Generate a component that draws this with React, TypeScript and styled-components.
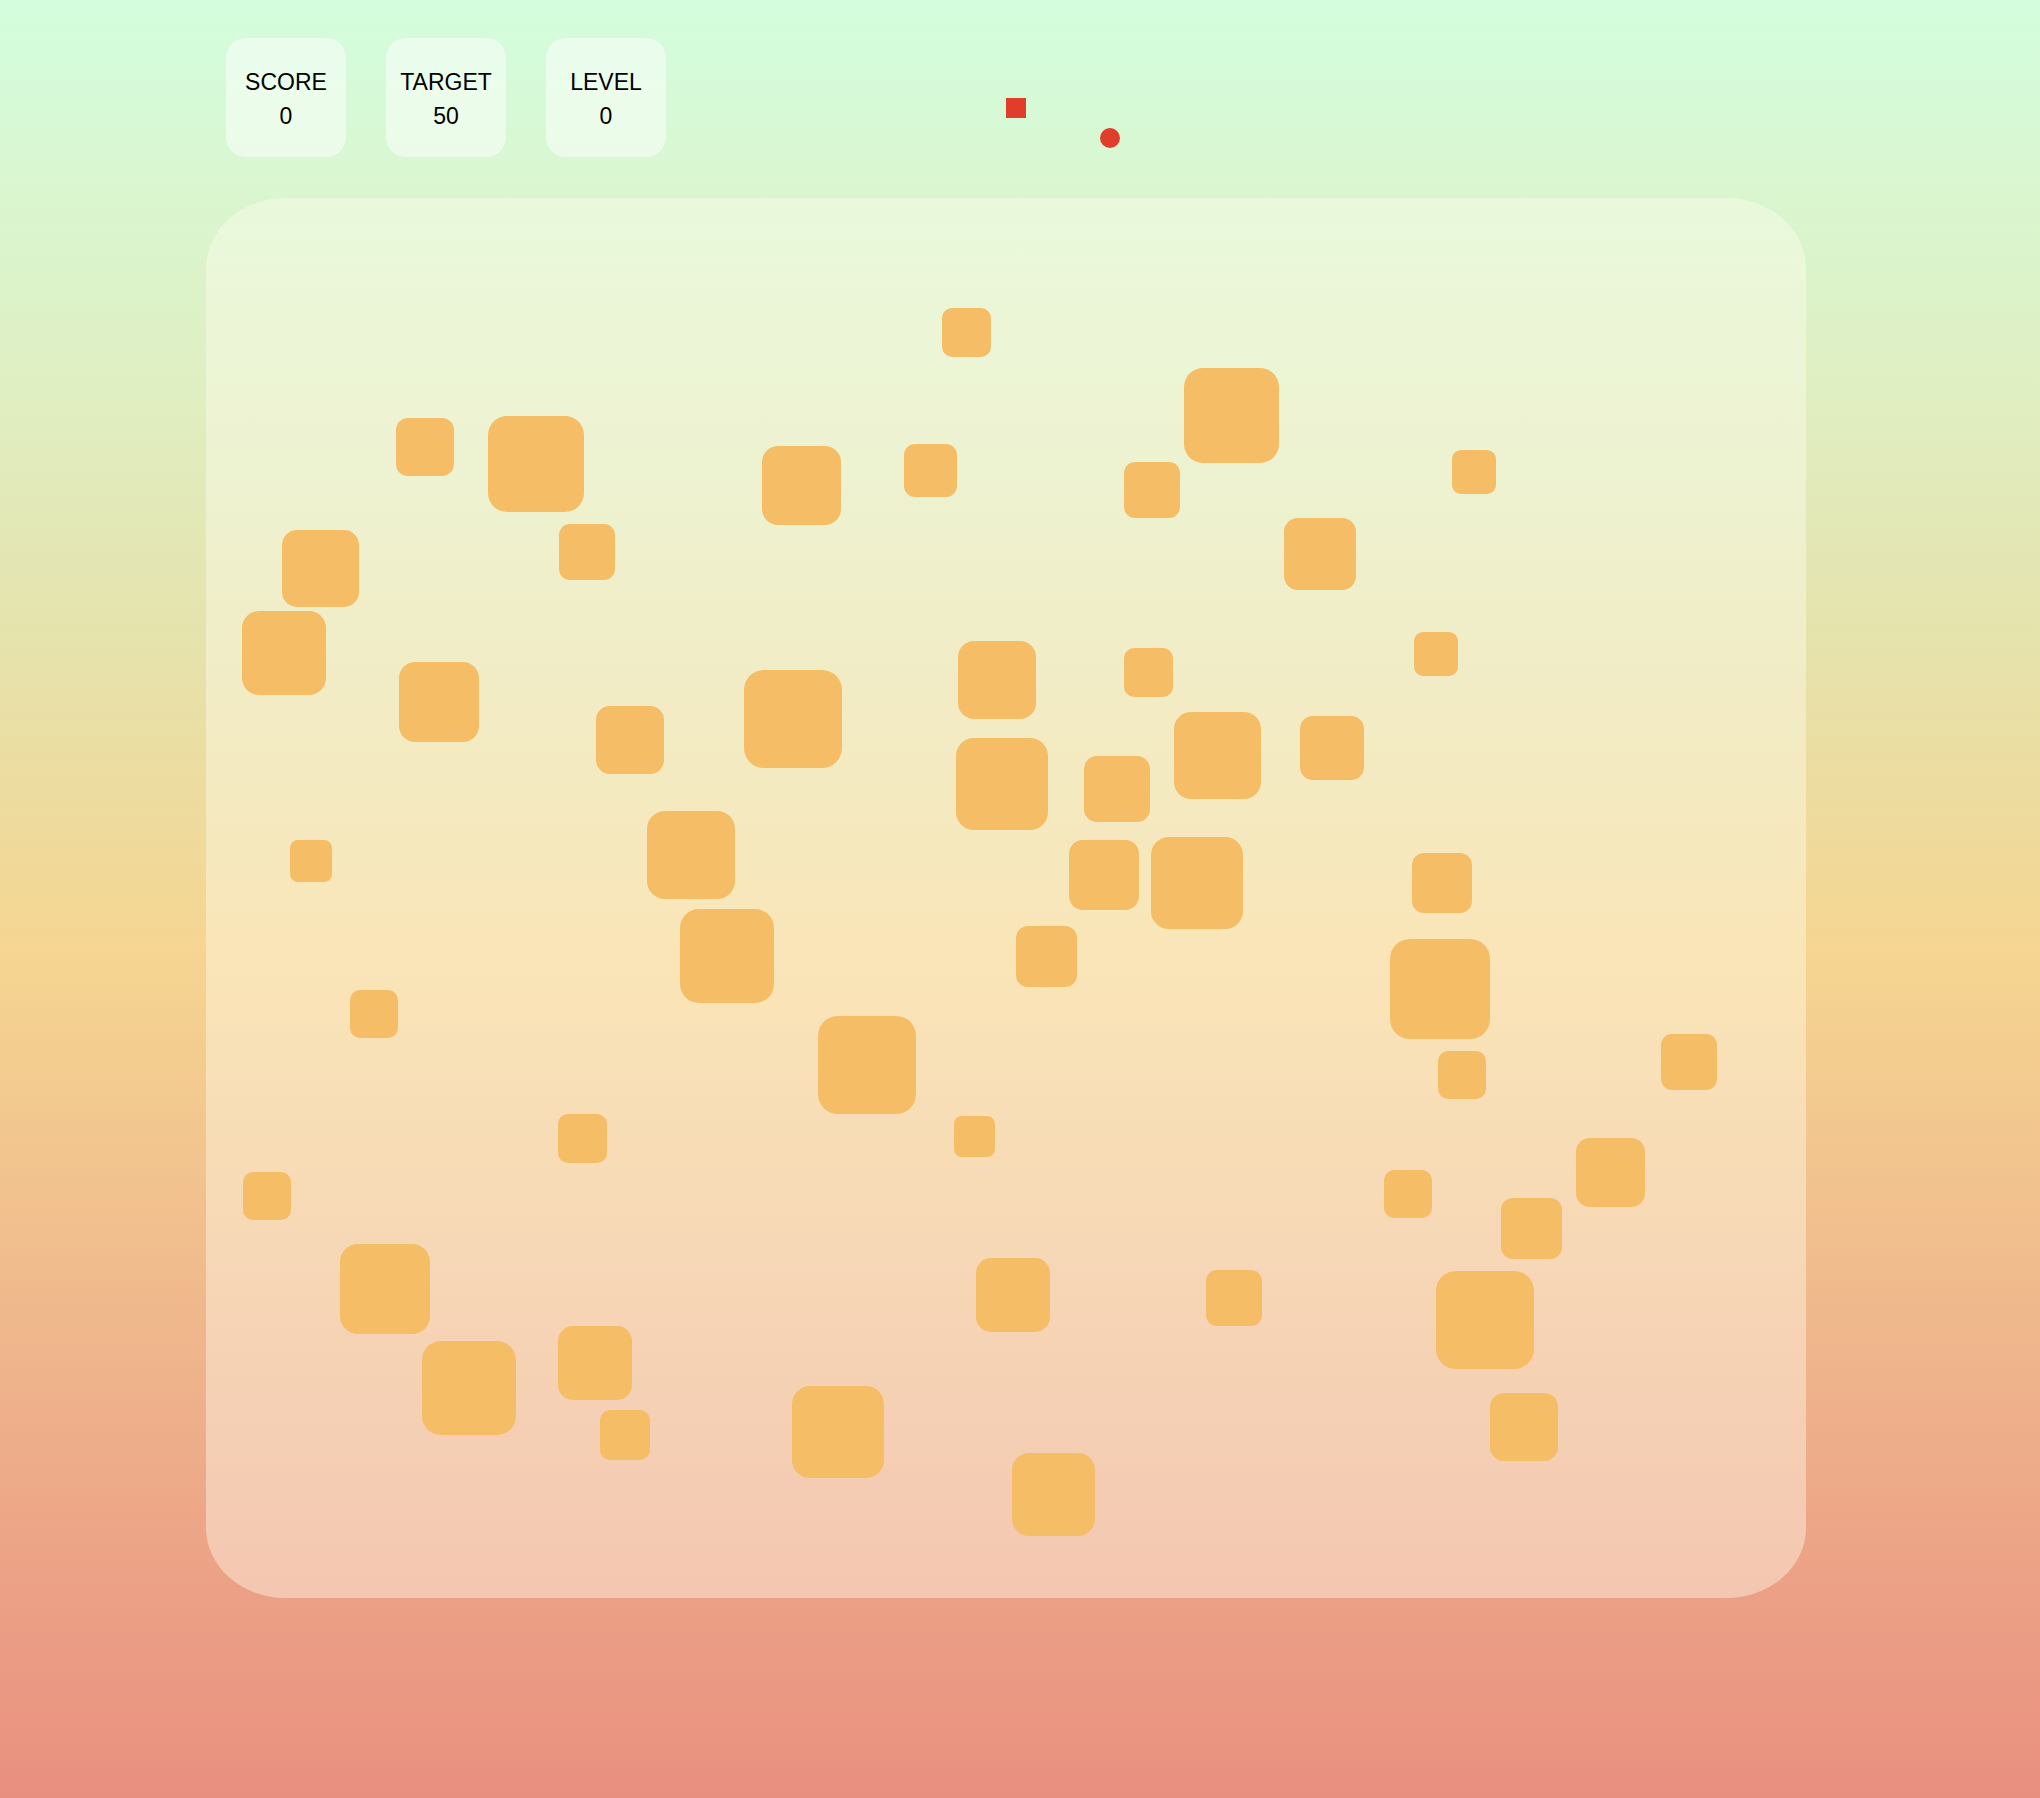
import styled, { createGlobalStyle } from "styled-components";

const GlobalStyle = createGlobalStyle`
  html, body {
    margin: 0;
    padding: 0;
  }
  body {
    font-family: "Liberation Sans", Arial, sans-serif;
    color: #000;
  }
`;

// [x, y, size] relative to the board
const blocks: [number, number, number][] = [
  [736, 110, 49],
  [978, 170, 95],
  [190, 220, 58],
  [282, 218, 96],
  [556, 248, 79],
  [698, 246, 53],
  [918, 264, 56],
  [1246, 252, 44],
  [353, 326, 56],
  [76, 332, 77],
  [1078, 320, 72],
  [36, 413, 84],
  [193, 464, 80],
  [752, 443, 78],
  [918, 450, 49],
  [1208, 434, 44],
  [390, 508, 68],
  [538, 472, 98],
  [750, 540, 92],
  [878, 558, 66],
  [968, 514, 87],
  [1094, 518, 64],
  [84, 642, 42],
  [441, 613, 88],
  [863, 642, 70],
  [945, 639, 92],
  [1206, 655, 60],
  [474, 711, 94],
  [810, 728, 61],
  [1184, 741, 100],
  [144, 792, 48],
  [612, 818, 98],
  [1232, 853, 48],
  [1455, 836, 56],
  [352, 916, 49],
  [748, 918, 41],
  [37, 974, 48],
  [1178, 972, 48],
  [1370, 940, 69],
  [1295, 1000, 61],
  [134, 1046, 90],
  [770, 1060, 74],
  [1000, 1072, 56],
  [1230, 1073, 98],
  [216, 1143, 94],
  [352, 1128, 74],
  [394, 1212, 50],
  [586, 1188, 92],
  [1284, 1195, 68],
  [806, 1255, 83],
];

const stats = [
  { label: "SCORE", value: 0 },
  { label: "TARGET", value: 50 },
  { label: "LEVEL", value: 0 },
];

const Page = styled.div`
  min-height: 1798px;
  box-sizing: border-box;
  padding: 38px 206px 0;
  background: linear-gradient(
    180deg,
    #d3fddd 0%,
    #dff0c4 20%,
    #e5e3ad 35%,
    #f5d591 53%,
    #efb58c 75%,
    #e98f80 100%
  );
`;

const TopBar = styled.header`
  position: relative;
  display: flex;
  gap: 40px;
  padding-left: 20px;
  height: 119px;
  margin-bottom: 41px;
`;

const StatCard = styled.div`
  width: 120px;
  height: 119px;
  box-sizing: border-box;
  padding-top: 27px;
  border-radius: 20px;
  background: rgba(255, 255, 255, 0.5);
  text-align: center;
  font-size: 23px;
  line-height: 34px;
`;

const Paddle = styled.div`
  position: absolute;
  left: 800px;
  top: 60px;
  width: 20px;
  height: 20px;
  background: #e03e2a;
`;

const Ball = styled.div`
  position: absolute;
  left: 894px;
  top: 90px;
  width: 20px;
  height: 20px;
  border-radius: 50%;
  background: #e03e2a;
`;

const Board = styled.main`
  position: relative;
  width: 1600px;
  height: 1400px;
  border-radius: 5%;
  background: rgba(255, 252, 238, 0.42);
`;

const Block = styled.div<{ $size: number }>`
  position: absolute;
  width: ${(p) => p.$size}px;
  height: ${(p) => p.$size}px;
  border-radius: ${(p) => Math.round(p.$size * 0.2)}px;
  background: #f6bd67;
`;

const App = () => {
  return (
    <Page>
      <GlobalStyle />
      <TopBar>
        {stats.map((s) => (
          <StatCard key={s.label}>
            <div>{s.label}</div>
            <div>{s.value}</div>
          </StatCard>
        ))}
        <Paddle />
        <Ball />
      </TopBar>

      <Board>
        {blocks.map(([x, y, size], i) => (
          <Block key={i} $size={size} style={{ left: x, top: y }} />
        ))}
      </Board>
    </Page>
  );
};

export default App;
